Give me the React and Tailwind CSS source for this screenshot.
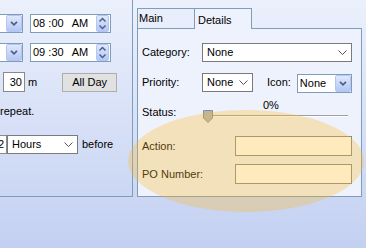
import React from 'react';

function XpDropBtn() {
  return (
    <div className="w-[16px] h-[17px] rounded-[2px] border border-[#b4c6f0] bg-gradient-to-b from-[#dfe8fd] to-[#b3c6f5] flex items-center justify-center">
      <svg width="8" height="5" viewBox="0 0 8 5">
        <path d="M1 0.8 L4 3.8 L7 0.8" stroke="#4d6185" strokeWidth="1.7" fill="none" />
      </svg>
    </div>
  );
}

function Spinner() {
  return (
    <div className="w-[13px] h-[17px] rounded-[2px] border border-[#b4c6f0] bg-gradient-to-b from-[#dfe8fd] to-[#b3c6f5] flex items-center justify-center">
      <svg width="11" height="15" viewBox="0 0 11 15">
        <path d="M2.5 5.5 L5.5 2.5 L8.5 5.5" stroke="#4d6185" strokeWidth="1.5" fill="none" />
        <line x1="0" y1="7.5" x2="11" y2="7.5" stroke="#c9d6f6" strokeWidth="1" />
        <path d="M2.5 9.5 L5.5 12.5 L8.5 9.5" stroke="#4d6185" strokeWidth="1.5" fill="none" />
      </svg>
    </div>
  );
}

function Chevron() {
  return (
    <svg width="9" height="5" viewBox="0 0 9 5" className="shrink-0">
      <path d="M0.5 0.5 L4.5 4.5 L8.5 0.5" stroke="#555" strokeWidth="1" fill="none" />
    </svg>
  );
}

function TimeBox({ hh, mm }) {
  return (
    <div className="w-[81px] h-[19px] border border-[#7f9db9] bg-white flex items-center pl-[2px] pr-[1px]">
      <span className="flex-1">
        {hh} :{mm}
        <span className="ml-[8px]">AM</span>
      </span>
      <Spinner />
    </div>
  );
}

function Select({ w, value }) {
  return (
    <div className={`${w} h-[19px] border border-[#7a7a7a] bg-white flex items-center pl-[4px] pr-[4px]`}>
      <span className="flex-1">{value}</span>
      <Chevron />
    </div>
  );
}

export default function App() {
  return (
    <div className="relative w-[366px] h-[248px] overflow-hidden bg-gradient-to-b from-[#ebf0fc] to-[#c3d0f1] font-['Liberation_Sans',Arial,sans-serif] text-[11px] leading-[13px] text-black">
      <div className="flex">
        {/* left panel, cut off */}
        <div className="w-[133px] h-[197px] shrink-0 border-r border-b border-[#7f9db9] overflow-hidden pt-[14px] flex flex-col">
          <div className="flex h-[19px]">
            <div className="w-[40px] -ml-[17px] h-[19px] border border-[#7f9db9] bg-white flex items-center justify-end">
              <XpDropBtn />
            </div>
            <div className="ml-[7px]">
              <TimeBox hh="08" mm="00" />
            </div>
          </div>
          <div className="flex h-[19px] mt-[10px]">
            <div className="w-[40px] -ml-[17px] h-[19px] border border-[#7f9db9] bg-white flex items-center justify-end">
              <XpDropBtn />
            </div>
            <div className="ml-[7px]">
              <TimeBox hh="09" mm="30" />
            </div>
          </div>
          <div className="flex items-center h-[20px] mt-[10px]">
            <div className="ml-[3px] w-[22px] h-[20px] border border-[#8a8a8a] bg-white flex items-center justify-end pr-[2px]">30</div>
            <span className="ml-[3px]">m</span>
            <div className="ml-[25px] w-[55px] h-[19px] border border-[#adadad] bg-[#e1e1e1] flex items-center justify-center">All Day</div>
          </div>
          <div className="mt-[13px] h-[13px] whitespace-nowrap">repeat.</div>
          <div className="flex items-center h-[19px] mt-[17px]">
            <div className="w-[20px] -ml-[13px] h-[19px] border border-[#8a8a8a] bg-white flex items-center justify-end pr-[2px]">2</div>
            <Select w="w-[71px]" value="Hours" />
            <span className="ml-[4px]">before</span>
          </div>
        </div>

        {/* right tabbed panel */}
        <div className="ml-[4px] mt-[8px] w-[225px] flex flex-col">
          <div className="flex h-[21px]">
            <div className="w-[57px] h-[21px] border-t border-l border-b border-[#7f9db9] bg-[#e8eefb] pl-[1px] pt-[3px]">Main</div>
            <div className="w-[58px] h-[21px] border-t border-l border-r border-[#7f9db9] bg-[#eef2fc] pl-[3px] pt-[5px]">Details</div>
            <div className="flex-1 h-[21px] border-b border-[#7f9db9]" />
          </div>
          <div className="h-[168px] border-l border-r border-b border-[#7f9db9] bg-[#eef2fc] pt-[14px] pl-[4px] flex flex-col">
            <div className="flex items-center h-[19px]">
              <span className="w-[60px]">Category:</span>
              <Select w="w-[150px]" value="None" />
            </div>
            <div className="flex items-start h-[20px] mt-[11px]">
              <span className="w-[60px] h-[19px] flex items-center">Priority:</span>
              <Select w="w-[51px]" value="None" />
              <span className="ml-[14px] h-[19px] flex items-center">Icon:</span>
              <div className="ml-[6px] mt-[1px] w-[55px] h-[19px] border border-[#7f9db9] bg-white flex items-center pl-[2px] pr-[0px]">
                <span className="flex-1">None</span>
                <XpDropBtn />
              </div>
            </div>
            <div className="flex mt-[6px]">
              <span className="w-[60px] pt-[7px]">Status:</span>
              <div className="flex flex-col w-[146px]">
                <span className="ml-[61px] h-[13px]">0%</span>
                <div className="flex -mt-[2px] h-[13px]">
                  <svg width="10" height="13" viewBox="0 0 10 13" className="ml-[1px] shrink-0">
                    <path d="M0.5 0.5 H9.5 V8 L5 12.5 L0.5 8 Z" fill="#b4b4b4" stroke="#8c8c8c" />
                  </svg>
                  <div className="flex-1 mt-[5px] h-[2px] border-t border-[#a0a0a0] border-b border-b-white" />
                </div>
              </div>
            </div>
            <div className="flex items-center h-[20px] mt-[13px]">
              <span className="w-[93px]">Action:</span>
              <div className="w-[117px] h-[20px] border border-[#8a8a8a] bg-white" />
            </div>
            <div className="flex items-center h-[20px] mt-[8px]">
              <span className="w-[93px]">PO Number:</span>
              <div className="w-[117px] h-[20px] border border-[#8a8a8a] bg-white" />
            </div>
          </div>
        </div>
      </div>

      {/* highlight ellipse */}
      <div className="absolute left-[128px] top-[110px] w-[236px] h-[102px] rounded-[50%] bg-[rgba(255,185,40,0.3)] pointer-events-none" />
    </div>
  );
}
